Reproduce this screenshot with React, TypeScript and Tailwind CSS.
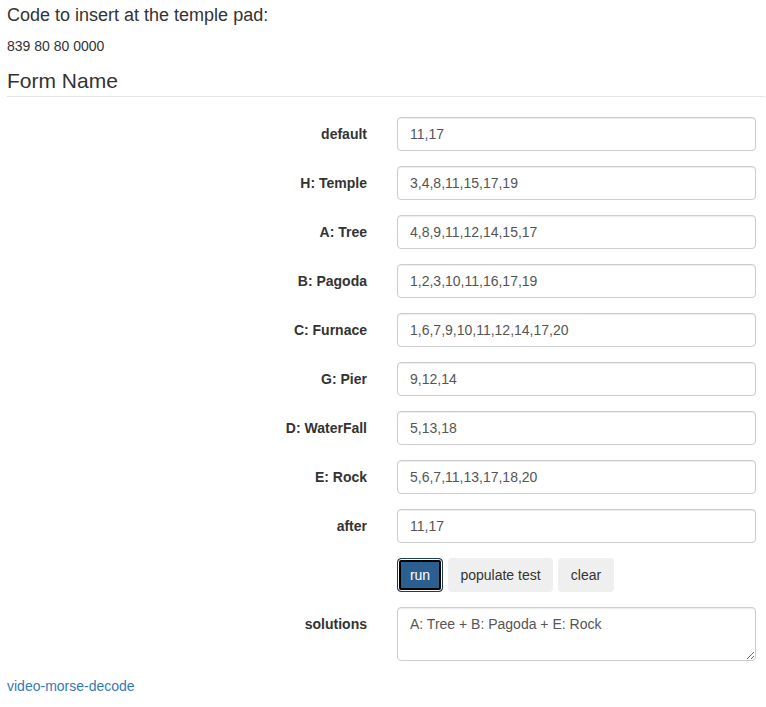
import { useState } from "react";

const rows: [string, string][] = [
  ["default", "11,17"],
  ["H: Temple", "3,4,8,11,15,17,19"],
  ["A: Tree", "4,8,9,11,12,14,15,17"],
  ["B: Pagoda", "1,2,3,10,11,16,17,19"],
  ["C: Furnace", "1,6,7,9,10,11,12,14,17,20"],
  ["G: Pier", "9,12,14"],
  ["D: WaterFall", "5,13,18"],
  ["E: Rock", "5,6,7,11,13,17,18,20"],
  ["after", "11,17"],
];

const inputCls =
  "block h-[34px] w-[359px] rounded-[4px] border border-[#ccc] bg-white px-3 py-[6px] text-[14px] text-[#555] shadow-[inset_0_1px_1px_rgba(0,0,0,0.075)] outline-none";

export default function App() {
  const [values, setValues] = useState(rows.map((r) => r[1]));
  const [solutions, setSolutions] = useState("A: Tree + B: Pagoda + E: Rock");

  return (
    <div className="min-h-[707px] bg-white px-[7px] text-[14px] leading-[20px] text-[#333] font-['Liberation_Sans',Arial,sans-serif]">
      <div className="pt-[5px] text-[18px] leading-[20px]">Code to insert at the temple pad:</div>
      <div className="mt-[11px] text-[14px] leading-[20px]">839 80 80 0000</div>

      <form className="mt-[10px]" onSubmit={(e) => e.preventDefault()}>
        <div className="mb-[20px] w-[758px] border-b border-[#e5e5e5] text-[21px] leading-[30px]">
          Form Name
        </div>

        {rows.map(([label], i) => (
          <div key={label} className="mb-[15px] flex">
            <label className="w-[360px] pt-[7px] text-right font-bold">{label}</label>
            <div className="ml-[30px]">
              <input
                className={inputCls}
                value={values[i]}
                onChange={(e) =>
                  setValues((v) => v.map((x, j) => (j === i ? e.target.value : x)))
                }
              />
            </div>
          </div>
        ))}

        <div className="mb-[15px] flex">
          <div className="w-[360px]" />
          <div className="ml-[30px] flex gap-[5px]">
            <button
              type="button"
              className="h-[34px] w-[46px] rounded-[4px] border border-[#1b3a57] bg-[#2a5f8f] text-[14px] text-white shadow-[inset_0_0_0_1px_#fff,inset_0_0_0_3px_#000]"
            >
              run
            </button>
            <button
              type="button"
              className="h-[34px] w-[105px] rounded-[4px] bg-[#efefef] text-[14px] text-[#333]"
            >
              populate test
            </button>
            <button
              type="button"
              className="h-[34px] w-[56px] rounded-[4px] bg-[#efefef] text-[14px] text-[#333]"
              onClick={() => setSolutions("")}
            >
              clear
            </button>
          </div>
        </div>

        <div className="mb-[15px] flex">
          <label className="w-[360px] pt-[7px] text-right font-bold">solutions</label>
          <div className="ml-[30px]">
            <textarea
              className="block h-[54px] w-[359px] rounded-[4px] border border-[#ccc] bg-white px-3 py-[6px] text-[14px] leading-[20px] text-[#555] shadow-[inset_0_1px_1px_rgba(0,0,0,0.075)] outline-none"
              value={solutions}
              onChange={(e) => setSolutions(e.target.value)}
            />
          </div>
        </div>
      </form>

      <a href="#" className="text-[#337ab7] hover:underline">
        video-morse-decode
      </a>
    </div>
  );
}
